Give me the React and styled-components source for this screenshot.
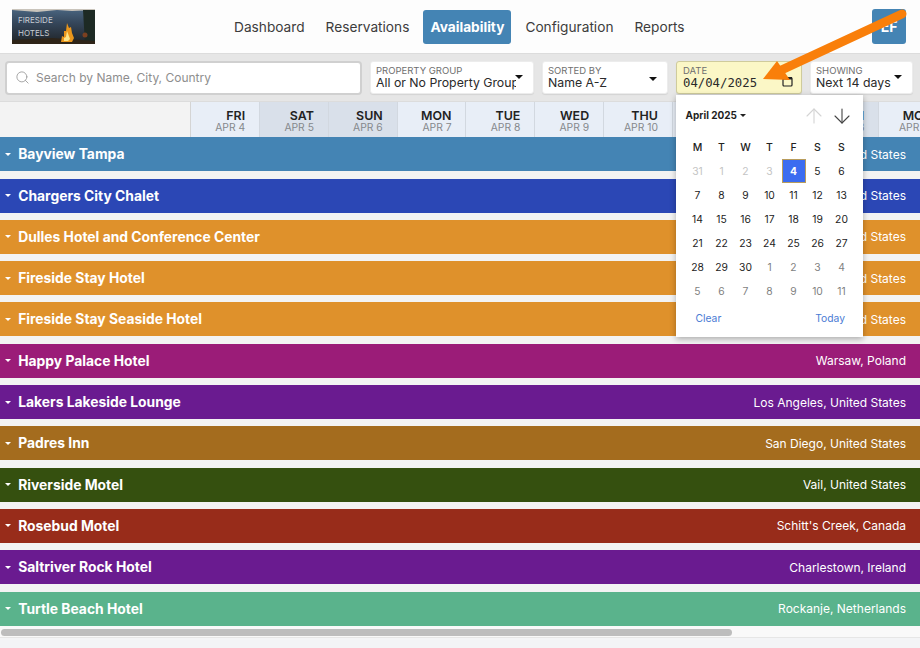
import React from "react";
import styled, { createGlobalStyle } from "styled-components";
import { ArrowDown, ArrowUp, Search } from "lucide-react";

const NAV = ["Dashboard", "Reservations", "Availability", "Configuration", "Reports"];

const DAY_NAMES = ["FRI", "SAT", "SUN", "MON", "TUE", "WED", "THU"];
const DAYS = Array.from({ length: 14 }, (_, i) => ({
  name: DAY_NAMES[i % 7],
  date: `APR ${i + 4}`,
  weekend: i % 7 === 1 || i % 7 === 2,
}));

const HOTELS = [
  { name: "Bayview Tampa", place: "Tampa, United States", color: "#4484b4" },
  { name: "Chargers City Chalet", place: "San Diego, United States", color: "#2b47b5" },
  { name: "Dulles Hotel and Conference Center", place: "Dulles, United States", color: "#df912b" },
  { name: "Fireside Stay Hotel", place: "Denver, United States", color: "#df912b" },
  { name: "Fireside Stay Seaside Hotel", place: "Miami, United States", color: "#df912b" },
  { name: "Happy Palace Hotel", place: "Warsaw, Poland", color: "#9b1c78" },
  { name: "Lakers Lakeside Lounge", place: "Los Angeles, United States", color: "#6a1b90" },
  { name: "Padres Inn", place: "San Diego, United States", color: "#a46c1e" },
  { name: "Riverside Motel", place: "Vail, United States", color: "#35500f" },
  { name: "Rosebud Motel", place: "Schitt's Creek, Canada", color: "#982c1a" },
  { name: "Saltriver Rock Hotel", place: "Charlestown, Ireland", color: "#6a1b90" },
  { name: "Turtle Beach Hotel", place: "Rockanje, Netherlands", color: "#5ab38c" },
];

const CAL_HEAD = ["M", "T", "W", "T", "F", "S", "S"];
const CAL_CELLS = [
  ...[31, 1, 2, 3].map((d) => ({ d, tone: "disabled" })),
  { d: 4, tone: "selected" },
  ...Array.from({ length: 26 }, (_, i) => ({ d: i + 5, tone: "normal" })),
  ...[1, 2, 3, 4, 5, 6, 7, 8, 9, 10, 11].map((d) => ({ d, tone: "muted" })),
];

const GlobalStyle = createGlobalStyle`
  html, body {
    margin: 0;
    background: #f3f4f6;
    font-family: Inter, "Liberation Sans", sans-serif;
  }
  * { box-sizing: border-box; }
`;

const Page = styled.div`
  position: relative;
  width: 920px;
  height: 648px;
  overflow: hidden;
  display: flex;
  flex-direction: column;
`;

const Header = styled.header`
  height: 54px;
  flex: none;
  display: flex;
  align-items: center;
  padding: 0 14px 0 12px;
  background: #fdfdfd;
  border-bottom: 1px solid #dcdcdc;
`;

const Nav = styled.nav`
  flex: 1;
  display: flex;
  align-items: center;
  gap: 7px;
  margin-left: 132px;
`;

const NavItem = styled.a`
  height: 34px;
  display: flex;
  align-items: center;
  padding: 0 7px;
  border-radius: 3px;
  font-size: 13.7px;
  color: ${(p) => (p.$active ? "#fff" : "#3c3c3c")};
  font-weight: ${(p) => (p.$active ? 700 : 400)};
  background: ${(p) => (p.$active ? "#4484b4" : "transparent")};
`;

const Avatar = styled.div`
  width: 34px;
  height: 35px;
  display: flex;
  align-items: center;
  justify-content: center;
  border-radius: 3px;
  background: #4484b4;
  color: #fff;
  font-size: 14px;
  font-weight: 700;
`;

const Toolbar = styled.div`
  height: 48px;
  flex: none;
  display: flex;
  align-items: center;
  gap: 8px;
  padding: 0 7px 0 5px;
  background: #e6e6e6;
  border-bottom: 1px solid #dcdcdc;
`;

const SearchBox = styled.div`
  width: 357px;
  height: 34px;
  display: flex;
  align-items: center;
  gap: 6px;
  padding-left: 8px;
  background: #fff;
  border: 2px solid #d0d0d0;
  border-radius: 4px;
  color: #8e8e8e;
  font-size: 12px;
`;

const Control = styled.div`
  position: relative;
  width: ${(p) => p.$width}px;
  height: 33px;
  padding: 4px ${(p) => p.$paddingRight || 5}px 0 ${(p) => (p.$highlight ? 6 : 5)}px;
  background: ${(p) => (p.$highlight ? "#fbf7c6" : "#fff")};
  border: 1px solid ${(p) => (p.$highlight ? "#cfcb9c" : "#ececec")};
  border-radius: 3px;
  box-shadow: 0 1px 1px rgba(0, 0, 0, 0.08);
`;

const ControlLabel = styled.div`
  font-size: 9.5px;
  line-height: 10px;
  color: #6f6f6f;
`;

const ControlValue = styled.div`
  font-size: 12.3px;
  line-height: 14px;
  color: #2a2a2a;
  white-space: nowrap;
  overflow: hidden;
`;

const DateValue = styled.div`
  font-family: "DejaVu Sans Mono", "Liberation Mono", monospace;
  font-size: 12.3px;
  line-height: 14px;
  color: #2a2a2a;
`;

const Caret = styled.span`
  position: absolute;
  right: ${(p) => p.$right}px;
  top: ${(p) => p.$top}px;
  width: 0;
  height: 0;
  border-left: 4px solid transparent;
  border-right: 4px solid transparent;
  border-top: 4px solid #111;
`;

const DateIcon = styled.svg`
  position: absolute;
  right: 8px;
  top: 14px;
`;

const DayHeader = styled.div`
  height: 35.3px;
  flex: none;
  display: flex;
  overflow: hidden;
  background: #f3f3f3;
`;

const DaySpacer = styled.div`
  width: 191.3px;
  flex: none;
  border-right: 1px solid #d4d4d4;
`;

const DayCell = styled.div`
  width: 68.8px;
  flex: none;
  padding: 8px 14px 0 0;
  text-align: right;
  background: ${(p) => (p.$weekend ? "#d9e0ea" : "#e8eef7")};
  border-right: 1px solid #d2d8e0;
`;

const DayName = styled.div`
  font-size: 12.4px;
  line-height: 12px;
  font-weight: 600;
  color: #222;
`;

const DayDate = styled.div`
  font-size: 10.3px;
  line-height: 10.5px;
  color: #85888c;
`;

const RowList = styled.div`
  flex: none;
  display: flex;
  flex-direction: column;
  gap: 7.3px;
  background: #f3f3f3;
`;

const Row = styled.div`
  height: 34px;
  display: flex;
  align-items: center;
  justify-content: space-between;
  padding: 0 14px 0 5px;
  background: ${(p) => p.$color};
  color: #fff;
`;

const RowName = styled.div`
  display: flex;
  align-items: center;
  gap: 7.2px;
  font-size: 13.85px;
  font-weight: 700;
`;

const RowCaret = styled.span`
  width: 0;
  height: 0;
  border-left: 3.5px solid transparent;
  border-right: 3.5px solid transparent;
  border-top: 3.5px solid #fff;
`;

const RowPlace = styled.div`
  font-size: 12px;
`;

const ScrollTrack = styled.div`
  height: 12.2px;
  flex: none;
  padding: 3px 1px 0;
  background: #f9f9f9;
  border-bottom: 1px solid #e6e6e6;
`;

const ScrollThumb = styled.div`
  width: 731px;
  height: 7.5px;
  border-radius: 4px;
  background: #bdbdbd;
`;

const Calendar = styled.div`
  position: absolute;
  left: 676px;
  top: 95px;
  width: 187px;
  height: 242px;
  padding: 0 9px 0 9.5px;
  background: #fff;
  box-shadow: 0 2px 6px rgba(0, 0, 0, 0.3);
`;

const CalTop = styled.div`
  height: 40px;
  display: flex;
  align-items: center;
  justify-content: space-between;
`;

const CalTitle = styled.div`
  display: flex;
  align-items: center;
  gap: 3px;
  font-size: 10px;
  font-weight: 700;
  color: #1e1e1e;
`;

const SmallCaret = styled.span`
  width: 0;
  height: 0;
  border-left: 3px solid transparent;
  border-right: 3px solid transparent;
  border-top: 3px solid #222;
`;

const CalArrows = styled.div`
  display: flex;
  gap: 4px;
  margin: 2px 0.5px 0 0;
`;

const CalGrid = styled.div`
  display: grid;
  grid-template-columns: repeat(7, 24px);
  grid-auto-rows: 24px;
`;

const CalHead = styled.div`
  display: flex;
  align-items: center;
  justify-content: center;
  font-size: 10.5px;
  font-weight: 500;
  color: #222;
`;

const TONES = { disabled: "#c4c4c4", muted: "#7f7f7f", normal: "#222", selected: "#fff" };

const CalDay = styled.div`
  display: flex;
  align-items: center;
  justify-content: center;
  font-size: 10.3px;
  color: ${(p) => TONES[p.$tone]};
  ${(p) =>
    p.$tone === "selected" &&
    `
    font-weight: 700;
    background: #3b6cf0;
    border: 1px solid #b89c5c;
  `}
`;

const CalFoot = styled.div`
  display: flex;
  justify-content: space-between;
  padding: 9px 9px 0 10px;
  font-size: 10.3px;
  color: #4a7bd4;
`;

const ArrowOverlay = styled.svg`
  position: absolute;
  left: 0;
  top: 0;
  pointer-events: none;
`;

function Logo() {
  return (
    <svg width="83" height="35" viewBox="0 0 83 35">
      <defs>
        <linearGradient id="sky" x1="0" y1="0" x2="0" y2="1">
          <stop offset="0" stopColor="#4a6580" />
          <stop offset="0.4" stopColor="#35465a" />
          <stop offset="1" stopColor="#1f2326" />
        </linearGradient>
      </defs>
      <rect width="83" height="35" fill="url(#sky)" />
      <path d="M0 0H83V1L60 2L45 1L25 3L0 1Z" fill="#c9c4bb" />
      <path d="M71 1H83V35H73Z" fill="#1d2a24" />
      <path d="M0 31L40 29L83 32V35H0Z" fill="#2e2418" />
      <path d="M55 14L57 19L59 18L60 24L62 29L60 33H49L50 27L52 28L52 22L54 22Z" fill="#e9961c" />
      <path d="M55 22L58 30L56 32H52L52 29L54 28Z" fill="#fbe58a" />
      <circle cx="73" cy="26" r="2.5" fill="#7a4020" />
      <text x="6" y="14" fontFamily="Inter, sans-serif" fontSize="8" fill="#c8cdd2">FIRESIDE</text>
      <text x="6" y="27" fontFamily="Inter, sans-serif" fontSize="8" fill="#c8cdd2">HOTELS</text>
    </svg>
  );
}

export default function App() {
  return (
    <>
      <GlobalStyle />
      <Page>
        <Header>
          <Logo />
          <Nav>
            {NAV.map((item) => (
              <NavItem key={item} $active={item === "Availability"}>
                {item}
              </NavItem>
            ))}
          </Nav>
          <Avatar>EF</Avatar>
        </Header>

        <Toolbar>
          <SearchBox>
            <Search size={15} strokeWidth={1.4} color="#9a9a9a" />
            Search by Name, City, Country
          </SearchBox>
          <Control $width={164} $paddingRight={17}>
            <ControlLabel>PROPERTY GROUP</ControlLabel>
            <ControlValue>All or No Property Group</ControlValue>
            <Caret $right={10} $top={13} />
          </Control>
          <Control $width={126}>
            <ControlLabel>SORTED BY</ControlLabel>
            <ControlValue>Name A-Z</ControlValue>
            <Caret $right={10} $top={15} />
          </Control>
          <Control $width={126} $highlight>
            <ControlLabel>DATE</ControlLabel>
            <DateValue>04/04/2025</DateValue>
            <DateIcon width="11" height="11" viewBox="0 0 11 11">
              <rect x="1" y="1.5" width="9" height="8.5" rx="1" fill="none" stroke="#222" strokeWidth="1.2" />
              <rect x="1" y="1" width="9" height="2.5" fill="#222" />
            </DateIcon>
          </Control>
          <Control $width={103}>
            <ControlLabel>SHOWING</ControlLabel>
            <ControlValue>Next 14 days</ControlValue>
            <Caret $right={10} $top={13} />
          </Control>
        </Toolbar>

        <DayHeader>
          <DaySpacer />
          {DAYS.map((day) => (
            <DayCell key={day.date} $weekend={day.weekend}>
              <DayName>{day.name}</DayName>
              <DayDate>{day.date}</DayDate>
            </DayCell>
          ))}
        </DayHeader>

        <RowList>
          {HOTELS.map((hotel) => (
            <Row key={hotel.name} $color={hotel.color}>
              <RowName>
                <RowCaret />
                {hotel.name}
              </RowName>
              <RowPlace>{hotel.place}</RowPlace>
            </Row>
          ))}
        </RowList>

        <ScrollTrack>
          <ScrollThumb />
        </ScrollTrack>

        <Calendar>
          <CalTop>
            <CalTitle>
              April 2025
              <SmallCaret />
            </CalTitle>
            <CalArrows>
              <ArrowUp size={24} strokeWidth={1.1} color="#d4d4d4" />
              <ArrowDown size={24} strokeWidth={1.1} color="#444" />
            </CalArrows>
          </CalTop>
          <CalGrid>
            {CAL_HEAD.map((h, i) => (
              <CalHead key={i}>{h}</CalHead>
            ))}
            {CAL_CELLS.map((cell, i) => (
              <CalDay key={i} $tone={cell.tone}>
                {cell.d}
              </CalDay>
            ))}
          </CalGrid>
          <CalFoot>
            <span>Clear</span>
            <span>Today</span>
          </CalFoot>
        </Calendar>

        <ArrowOverlay width="920" height="648" viewBox="0 0 920 648">
          <line x1="902" y1="14" x2="775" y2="73" stroke="#f97f0a" strokeWidth="9" strokeLinecap="round" />
          <polygon points="763,79 777,61 790,80" fill="#f97f0a" />
        </ArrowOverlay>
      </Page>
    </>
  );
}
